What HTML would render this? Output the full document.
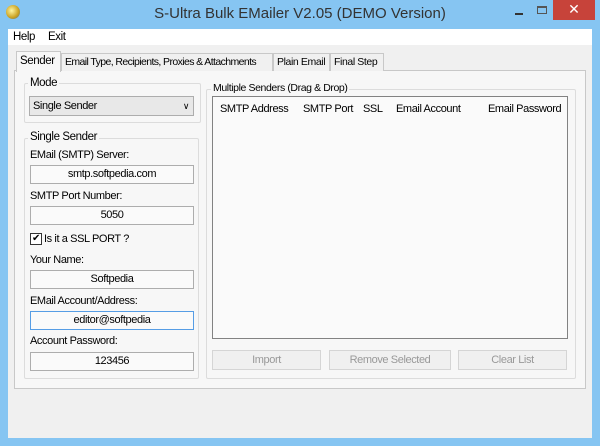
<!DOCTYPE html>
<html><head><style>
*{margin:0;padding:0;box-sizing:border-box}
body{width:600px;height:446px;background:#86c5f2;font-family:"Liberation Sans",sans-serif;font-size:11px;color:#000;position:relative;overflow:hidden}
.a{position:absolute;white-space:nowrap;letter-spacing:-0.4px}
.title{left:0;top:5px;width:600px;text-align:center;font-size:15px;color:#333;letter-spacing:0}
.client{left:8px;top:29px;width:584px;height:409px;background:#f0f0f0}
.menu{left:8px;top:29px;width:584px;height:16px;background:#fff}
.grp{border:1px solid #dcdcdc;border-radius:2px}
.lg{background:#f0f0f0;padding:0 2px}
.tb{background:#fafafa;border:1px solid #adadad;text-align:center;height:19px;line-height:17px}
.btn{border:1px solid #d5d5d5;background:#f0f0f0;color:#999;text-align:center;height:20px;line-height:18px}
.tab{top:53px;height:18px;border:1px solid #c8c8c8;border-bottom:none;background:#f0f0f0;line-height:16px;padding-left:3px;font-size:10.5px;overflow:hidden}
</style></head><body>
<div class="a" style="left:6px;top:5px;width:14px;height:14px;border-radius:50%;background:radial-gradient(circle at 40% 40%,#fff6a0,#c9a020 60%,#3a6fb0)"></div>
<div class="a title">S-Ultra Bulk EMailer V2.05 (DEMO Version)</div>
<div class="a" style="left:515px;top:13px;width:8px;height:2px;background:#333"></div>
<div class="a" style="left:537px;top:6px;width:10px;height:8px;border:1px solid #555;border-top-width:2px"></div>
<div class="a" style="left:553px;top:0;width:42px;height:20px;background:#c7433a;color:#fff;text-align:center;font-size:14px;line-height:19px;letter-spacing:0">✕</div>
<div class="a client"></div>
<div class="a menu"></div>
<div class="a" style="left:13px;top:31px;font-size:11.5px">Help</div>
<div class="a" style="left:48px;top:31px;font-size:11.5px">Exit</div>
<div class="a" style="left:14px;top:70px;width:572px;height:319px;border:1px solid #c8c8c8;background:#f7f7f7"></div>
<div class="a tab" style="left:61px;width:212px;letter-spacing:-0.6px">Email Type, Recipients, Proxies &amp; Attachments</div>
<div class="a tab" style="left:273px;width:57px">Plain Email</div>
<div class="a tab" style="left:330px;width:54px">Final Step</div>
<div class="a tab" style="left:16px;top:51px;width:45px;height:21px;background:#f7f7f7;font-size:11.5px;line-height:19px">Sender</div>
<div class="a grp" style="left:24px;top:83px;width:177px;height:40px"></div>
<div class="a lg" style="left:28px;top:77px;font-size:11.5px;background:#f7f7f7">Mode</div>
<div class="a" style="left:29px;top:96px;width:165px;height:20px;border:1px solid #adadad;background:#e8e8e8;line-height:18px;padding-left:3px;font-size:11px">Single Sender<span style="position:absolute;right:4px;top:0;font-size:9px">&#8744;</span></div>
<div class="a grp" style="left:24px;top:138px;width:175px;height:241px"></div>
<div class="a lg" style="left:28px;top:131px;font-size:11.5px;background:#f7f7f7">Single Sender</div>
<div class="a" style="left:30px;top:149px">EMail (SMTP) Server:</div>
<div class="a tb" style="left:30px;top:165px;width:164px">smtp.softpedia.com</div>
<div class="a" style="left:30px;top:190px">SMTP Port Number:</div>
<div class="a tb" style="left:30px;top:206px;width:164px">5050</div>
<div class="a" style="left:30px;top:233px;width:12px;height:12px;border:1px solid #333;background:#fff;font-size:10px;line-height:10px;text-align:center">✔</div>
<div class="a" style="left:44px;top:233px">Is it a SSL PORT ?</div>
<div class="a" style="left:30px;top:254px">Your Name:</div>
<div class="a tb" style="left:30px;top:270px;width:164px">Softpedia</div>
<div class="a" style="left:30px;top:295px">EMail Account/Address:</div>
<div class="a tb" style="left:30px;top:311px;width:164px;border-color:#569de5">editor@softpedia</div>
<div class="a" style="left:30px;top:335px">Account Password:</div>
<div class="a tb" style="left:30px;top:352px;width:164px">123456</div>
<div class="a grp" style="left:206px;top:89px;width:370px;height:290px"></div>
<div class="a lg" style="left:211px;top:82px;background:#f7f7f7;font-size:10.5px">Multiple Senders (Drag &amp; Drop)</div>
<div class="a" style="left:212px;top:96px;width:356px;height:243px;border:1px solid #828282;background:#fafafa"></div>
<div class="a" style="left:220px;top:103px">SMTP Address</div>
<div class="a" style="left:303px;top:103px">SMTP Port</div>
<div class="a" style="left:363px;top:103px">SSL</div>
<div class="a" style="left:396px;top:103px">Email Account</div>
<div class="a" style="left:488px;top:103px">Email Password</div>
<div class="a btn" style="left:212px;top:350px;width:109px">Import</div>
<div class="a btn" style="left:329px;top:350px;width:122px">Remove Selected</div>
<div class="a btn" style="left:458px;top:350px;width:109px">Clear List</div>
</body></html>
